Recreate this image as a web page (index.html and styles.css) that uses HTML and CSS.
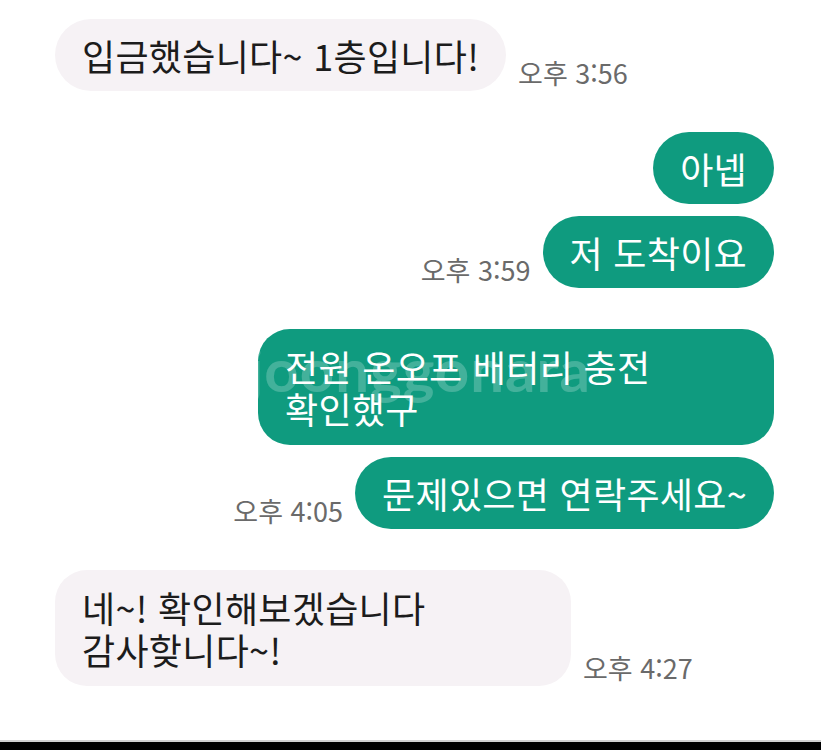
FILE: index.html
```html
<!DOCTYPE html>
<html lang="ko">
<head>
    <meta charset="UTF-8">
    <meta name="viewport" content="width=device-width, initial-scale=1.0">
    <title>Chat</title>
    <link rel="stylesheet" href="styles.css">
</head>
<body>

<div class="chat">
    <div class="group">
        <div class="row in">
            <div class="bubble">입금했습니다~ 1층입니다!</div>
            <span class="time">오후 3:56</span>
        </div>
    </div>

    <div class="group">
        <div class="row out">
            <div class="bubble">아넵</div>
        </div>
        <div class="row out">
            <span class="time">오후 3:59</span>
            <div class="bubble">저 도착이요</div>
        </div>
    </div>

    <div class="group">
        <div class="row out">
            <div class="bubble multi">전원 온오프 배터리 충전<br>확인했구</div>
            <!-- watermark over the bubble -->
            <span class="watermark">joonggonara</span>
        </div>
        <div class="row out">
            <span class="time">오후 4:05</span>
            <div class="bubble">문제있으면 연락주세요~</div>
        </div>
    </div>

    <div class="group">
        <div class="row in">
            <div class="bubble multi">네~! 확인해보겠습니다<br>감사핮니다~!</div>
            <span class="time">오후 4:27</span>
        </div>
    </div>
</div>

<div class="navbar"></div>

</body>
</html>
```

FILE: styles.css
```css
body {
    margin: 0;
    min-height: 750px;
    display: flex;
    flex-direction: column;
    background-color: #fff;
    font-family: "Noto Sans CJK KR", "Noto Sans", sans-serif;
}
.chat {
    display: flex;
    flex-direction: column;
    gap: 41px;
    padding: 19px 47px 0 55px;
}
.group {
    display: flex;
    flex-direction: column;
    gap: 12px;
}
.row {
    position: relative;
    display: flex;
    align-items: flex-end;
    gap: 12px;
}
.row.in {
    justify-content: flex-start;
}
.row.out {
    justify-content: flex-end;
}
.bubble {
    padding: 15px 27px;
    border-radius: 36px;
    font-size: 36px;
    line-height: 42px;
    letter-spacing: 0.3px;
    color: #1c1c1c;
    background-color: #f6f2f5;
}
.row.out .bubble {
    color: #fff;
    background-color: #0f9b7f;
}
.bubble.multi {
    box-sizing: border-box;
    width: 516px;
    padding-top: 16px;
    padding-bottom: 16px;
    border-radius: 32px;
}
.time {
    margin-bottom: 3px;
    font-size: 27px;
    line-height: 30px;
    color: #6a6a6a;
    white-space: nowrap;
}
.watermark {
    position: absolute;
    left: 193px;
    top: 4px;
    font-family: "Lato", sans-serif;
    font-weight: 700;
    font-size: 60px;
    letter-spacing: 1px;
    color: rgba(255, 255, 255, 0.22);
    pointer-events: none;
}
.navbar {
    margin-top: auto;
    height: 8px;
    border-top: 2px solid #d0d0d0;
    background-color: #000;
}
```
